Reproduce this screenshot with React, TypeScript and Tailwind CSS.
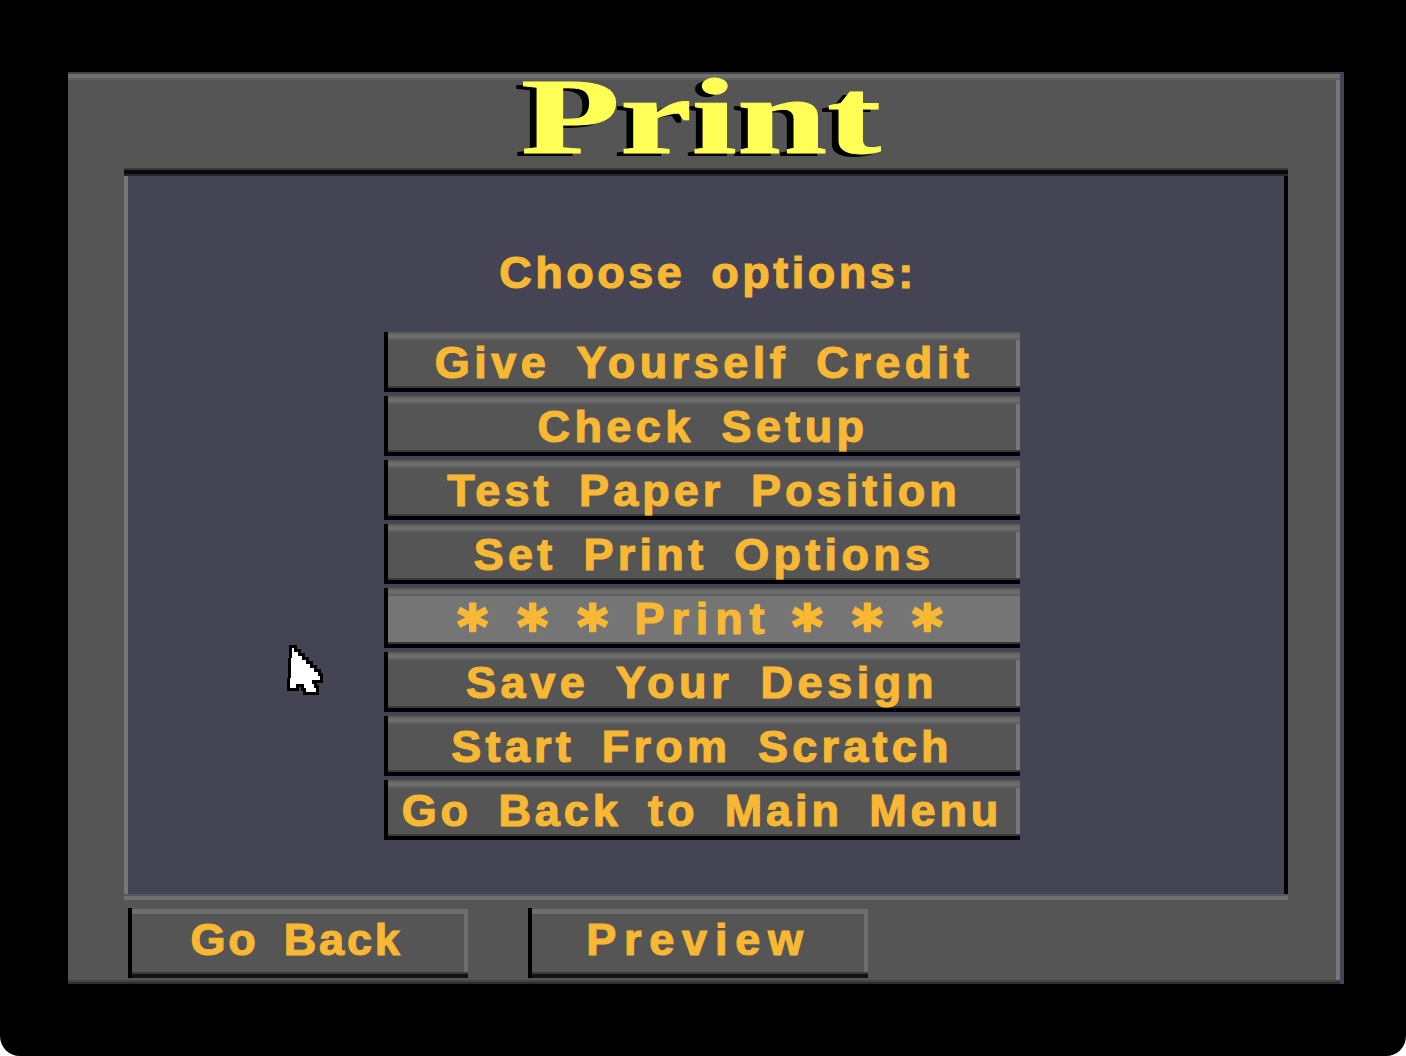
const items = [
  { t: "Give Yourself Credit", c: "tracking-[4.5px]" },
  { t: "Check Setup", c: "tracking-[4.4px] -translate-x-[1px]" },
  { t: "Test Paper Position", c: "tracking-[4.05px]" },
  { t: "Set Print Options", c: "tracking-[4.3px]" },
  { t: "* * * Print * * *", c: "-translate-x-[4px]", active: true },
  { t: "Save Your Design", c: "tracking-[4.6px] -translate-x-[2px]" },
  { t: "Start From Scratch", c: "tracking-[4.25px] -translate-x-[2px]" },
  { t: "Go Back to Main Menu", c: "tracking-[3.9px] -translate-x-[2px]" },
];

const font =
  "font-['Liberation_Sans',sans-serif] font-bold text-[45px] leading-none text-[#f8b834] [-webkit-text-stroke:1.2px_#f8b834] [word-spacing:10px] whitespace-pre";

const PATH = "M6 6h2v4h4v4h4v4h4v4h4v4h4v4h4v4h2v4h-8v4h2v4h2v4h-10v-4h-2v-4h-8v4h-6z";

function Cursor() {
  return (
    <svg className="absolute left-[286px] top-[642px]" width="40" height="56" viewBox="0 0 40 56" shapeRendering="crispEdges">
      <path d={PATH} fill="#000" stroke="#000" strokeWidth="6" />
      <path d={PATH} fill="#fff" />
    </svg>
  );
}

function Star() {
  return (
    <span className="w-[60px] h-[40px] flex items-center justify-center font-['DejaVu_Sans',sans-serif] text-[58px] [-webkit-text-stroke:2.5px_#f8b834] leading-none translate-y-[9px]">
      *
    </span>
  );
}

function Label({ t }: { t: string }) {
  if (t.startsWith("*")) {
    return (
      <>
        <Star />
        <Star />
        <Star />
        <span className="ml-[12px] mr-[6px] tracking-[6.85px]">Print</span>
        <Star />
        <Star />
        <Star />
      </>
    );
  }
  return <span>{t}</span>;
}

export default function App() {
  return (
    <div className="relative w-[1406px] h-[1056px] bg-black rounded-b-[20px] overflow-hidden pt-[72px] pl-[68px]">
      <div className="w-[1272px] h-[912px] bg-[#555555] flex flex-col shadow-[inset_0_2px_0_#444444,inset_0_6px_0_#707070,inset_0_8px_0_#5f5f5f,inset_0_-2px_0_#2e2e2e,inset_0_-4px_0_#444444,inset_-4px_0_0_#787878,4px_0_0_#444455]">
        <div className="h-[96px] flex items-center justify-center">
          <div className="font-['Liberation_Serif',serif] font-bold text-[108px] leading-none text-[#ffff55] [-webkit-text-stroke:1px_#ffff55] scale-x-[1.5] -translate-x-[3px] -translate-y-[3px] [text-shadow:-5px_3px_0_#000]">
            Print
          </div>
        </div>
        <div className="ml-[56px] w-[1164px] h-[732px] shrink-0 bg-[#444455] flex flex-col shadow-[inset_0_2px_0_#3a3a3a,inset_0_6px_0_#0a0a0a,inset_0_8px_0_#222233,inset_0_-4px_0_#707070,inset_0_-6px_0_#55556a,inset_-4px_0_0_#000000,inset_4px_0_0_#777777]">
          <div className={`${font} mt-[80px] h-[48px] flex items-center justify-center !tracking-[3.5px] pl-[4px]`}>
            Choose options:
          </div>
          <div className="mt-[36px] ml-[260px] w-[636px] flex flex-col gap-[4px]">
            {items.map((it) => (
              <div
                key={it.t}
                className={`${font} h-[60px] flex items-center justify-center border-l-4 border-l-black ${it.active ? "bg-[#757575]" : "bg-[#555555]"} shadow-[inset_0_2px_0_#5e5e5e,inset_0_6px_0_#6c6c6c,inset_0_8px_0_#606060,inset_0_-4px_0_#000000,inset_0_-6px_0_#383838,inset_-4px_0_0_#777777]`}
              >
                <div className={`${it.c} flex items-center`}>
                  <Label t={it.t} />
                </div>
              </div>
            ))}
          </div>
        </div>
        <div className="flex gap-[60px] pl-[60px] pt-[8px]">
          {[
            { t: "Go Back", c: "tracking-[2.8px] pr-[7px]" },
            { t: "Preview", c: "tracking-[7.8px] pr-[3px]" },
          ].map((b) => (
            <div
              key={b.t}
              className={`${font} ${b.c} w-[340px] h-[70px] pb-[8px] flex items-center justify-center border-l-4 border-l-black bg-[#555555] shadow-[inset_0_1px_0_#555555,inset_0_6px_0_#6e6e6e,inset_0_-4px_0_#141414,inset_0_-6px_0_#3a3a3a,inset_-4px_0_0_#6e6e6e]`}
            >
              {b.t}
            </div>
          ))}
        </div>
      </div>
      <Cursor />
    </div>
  );
}
